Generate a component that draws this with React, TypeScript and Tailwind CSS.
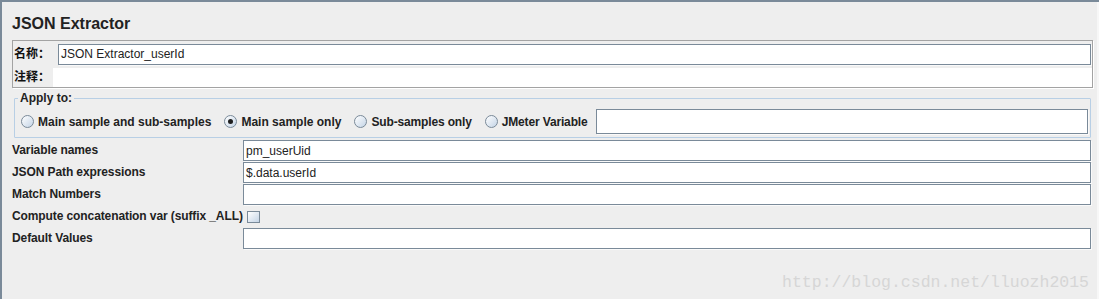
const sans = "font-['Liberation_Sans','Noto_Sans_CJK_SC',Arial,sans-serif]"

function Radio({ checked }: { checked?: boolean }) {
  return (
    <span className="flex h-[13px] w-[13px] shrink-0 items-center justify-center rounded-full border border-[#7a8a99] bg-linear-to-br from-white to-[#c4d4e6]">
      {checked && <span className="h-[5px] w-[5px] rounded-full bg-[#1e1e1e]" />}
    </span>
  )
}

function Field({ value, className = "" }: { value?: string; className?: string }) {
  return (
    <div
      className={`flex items-center border border-[#7a8a99] bg-white pl-[2px] text-[12px] text-[#222] shadow-[1px_1px_0_#fafafa] ${className}`}
    >
      {value}
    </div>
  )
}

const rows: { label: string; value?: string; checkbox?: boolean }[] = [
  { label: "Variable names", value: "pm_userUid" },
  { label: "JSON Path expressions", value: "$.data.userId" },
  { label: "Match Numbers", value: "" },
  { label: "Compute concatenation var (suffix _ALL)", checkbox: true },
  { label: "Default Values", value: "" },
]

export default function App() {
  return (
    <div className={`flex h-[299px] w-[1099px] overflow-hidden border-t-2 border-l-2 border-[#7a8a99] bg-[#eeeeee] ${sans}`}>
      <div className="flex w-[1091px] flex-col pl-[10px]">
        <h1 className="mt-[13px] h-[25px] text-[16px] leading-[18px] font-bold text-[#222]">JSON Extractor</h1>

        {/* name / comment */}
        <div className="flex w-[1081px] flex-col border border-[#a3a3a3] shadow-[1px_1px_0_#fff]">
          <div className="flex h-[26px] items-center">
            <span className="w-[45px] pl-[1px] text-[12px] font-bold text-[#111]">名称：</span>
            <Field value="JSON Extractor_userId" className="h-[21px] w-[1033px]" />
          </div>
          <div className="flex h-[20px] items-center">
            <span className="w-[40px] pl-[1px] text-[12px] font-bold text-[#111]">注释：</span>
            <div className="h-[19px] flex-1 bg-white" />
          </div>
        </div>

        {/* apply to */}
        <fieldset className="mt-[3px] ml-[2px] w-[1077px] rounded-[1px] border border-[#b8cfe5] pt-[3px] pr-[2px] pb-[2px] pl-[6px]">
          <legend className="ml-[-3px] px-[2px] text-[12px] leading-[14px] font-bold text-[#222]">Apply to:</legend>
          <div className="flex h-[27px] items-center text-[12px] font-bold text-[#222]">
            <Radio />
            <span className="ml-[4px]">Main sample and sub-samples</span>
            <span className="ml-[13px]"><Radio checked /></span>
            <span className="ml-[4px]">Main sample only</span>
            <span className="ml-[13px]"><Radio /></span>
            <span className="ml-[4px] tracking-[-0.15px]">Sub-samples only</span>
            <span className="ml-[13px]"><Radio /></span>
            <span className="ml-[4px] tracking-[-0.15px]">JMeter Variable</span>
            <Field className="ml-[8px] h-[25px] flex-1" />
          </div>
        </fieldset>

        {/* extractor settings */}
        <div className="mt-[2px] flex flex-col gap-[1px]">
          {rows.map((r) => (
            <div key={r.label} className="flex h-[21px] items-center">
              <span className="w-[231px] pb-[1px] text-[12px] font-bold tracking-[-0.1px] whitespace-nowrap text-[#222]">
                {r.label}
              </span>
              {r.checkbox ? (
                <span className="ml-[4px] h-[12px] w-[13px] border border-[#7a8a99] bg-linear-to-br from-white to-[#c4d4e6]" />
              ) : (
                <Field value={r.value} className="h-[21px] w-[848px]" />
              )}
            </div>
          ))}
        </div>

        <div className="mt-[24px] flex justify-end pr-[4px]">
          <span className="font-['Liberation_Mono',monospace] text-[16.5px] leading-[20px] text-[#d6d6d6]">
            http://blog.csdn.net/lluozh2015
          </span>
        </div>
      </div>
      <div className="ml-auto h-full w-[2px] bg-[#f7f7f7]" />
    </div>
  )
}
